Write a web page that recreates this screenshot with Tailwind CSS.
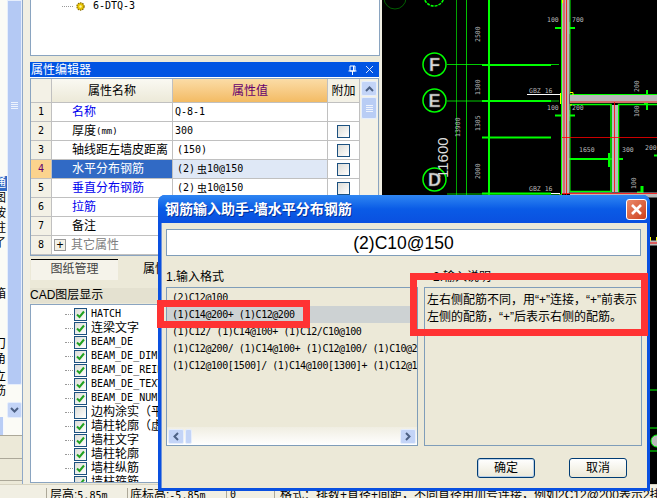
<!DOCTYPE html>
<html lang="zh">
<head>
<meta charset="UTF-8">
<title>钢筋输入助手</title>
<script src="https://cdn.jsdelivr.net/npm/@tailwindcss/browser@4"></script>
</head>
<body class="w-[657px] h-[498px] overflow-hidden bg-[#ece9d8] text-black text-[12px] leading-[14px] font-['Liberation_Sans','Noto_Sans_CJK_SC',sans-serif]">
<div class="relative w-[657px] h-[498px] overflow-hidden flex flex-col">

  <!-- main area -->
  <div class="flex h-[484px] shrink-0">

    <!-- far left strip -->
    <div class="w-[30px] shrink-0 flex bg-[#f1efe3]">
      <div class="w-[23px] h-full border-r border-[#8fa8c8] flex flex-col bg-[#ece9d8]">
        <div class="h-[436px] flex bg-[#fbfbf6] border-b border-[#aca899]">
          <div class="w-[7px] overflow-hidden whitespace-nowrap">
            <div class="-ml-[6px] w-[13px] pt-[2px]">
              <div class="h-[79px]">）</div>
              <div class="h-[89px]">）</div>
              <div class="bg-[#316ac5] text-white h-[15px] mt-[6px]">通</div>
              <div class="h-[15px]">图</div>
              <div class="h-[15px]">按</div>
              <div class="h-[15px]">柱</div>
              <div class="h-[51px]">了</div>
              <div class="h-[50px]">箱</div>
              <div class="h-[15px]">刀</div>
              <div class="h-[18px]">角</div>
              <div class="h-[14px]">立</div>
              <div class="h-[14px]">筋</div>
              <div class="mt-[19px] h-[18px] bg-[#b9cdf5] border-r border-[#f5f8ff] w-[10px]"></div>
            </div>
          </div>
          <div class="w-[15px] flex flex-col">
            <div class="h-[385px] bg-[#b4c9f4] border border-[#e6eefc] rounded-b-[2px] flex items-center justify-center">
              <div class="w-[7px] h-[7px] flex flex-col justify-between mt-[-175px]">
                <div class="h-px bg-[#eef3fd]"></div><div class="h-px bg-[#eef3fd]"></div><div class="h-px bg-[#eef3fd]"></div><div class="h-px bg-[#eef3fd]"></div>
              </div>
            </div>
            <div class="h-[17px]"></div>
            <div class="h-[16px] bg-[#c3d4f7] border border-[#e6eefc] rounded-[2px] flex items-center justify-center">
              <svg width="9" height="6" viewBox="0 0 9 6"><path d="M1 1l3.5 3.5L8 1" fill="none" stroke="#4d6185" stroke-width="2"/></svg>
            </div>
          </div>
        </div>
        <div class="h-[23px] border-b border-[#aca899]"></div>
        <div class="h-[22px] border-b border-[#aca899]"></div>
      </div>
    </div>

    <!-- middle panels -->
    <div class="w-[350px] shrink-0 flex flex-col">
      <div class="h-[56px] bg-white border-x border-b border-[#8aa4c0] relative shrink-0">
        <div class="flex items-center h-[12px] pl-[31px] gap-[2px]">
          <div class="w-[11px] border-t border-dotted border-[#999]"></div>
          <svg width="11" height="11" viewBox="0 0 11 11"><circle cx="5.5" cy="5.5" r="3.6" fill="#e8c400" stroke="#8a6d00" stroke-width="1.2" stroke-dasharray="1.5 0.8"/><circle cx="5.5" cy="5.5" r="1.2" fill="#fff6a0"/></svg>
          <span class="font-['DejaVu_Sans_Mono'] text-[10px] ml-[5px]">6-DTQ-3</span>
        </div>
      </div>
      <div class="h-[6px] shrink-0"></div>
      <div class="h-[15px] w-[349px] bg-[#0054e3] text-white pl-[1px] flex items-center shrink-0 relative">
        <span>属性编辑器</span>
        <svg class="ml-auto mr-[8px]" width="9" height="10" viewBox="0 0 9 10"><path d="M2 1h5v5H2zM0.5 6h8M4.5 6v4M5.5 1v5" fill="none" stroke="#fff"/></svg>
        <svg class="mr-[5px]" width="9" height="9" viewBox="0 0 9 9"><path d="M1 1l7 7M8 1L1 8" stroke="#dce6fb" stroke-width="1"/></svg>
      </div>
      <div class="h-px shrink-0 bg-white w-[349px]"></div>

      <!-- property table -->
      <div class="flex h-[178px] w-[349px] border border-[#8aa4c0] bg-white shrink-0 overflow-hidden">
        <div class="w-[329px] shrink-0 grid grid-cols-[21px_121px_155px_32px] grid-rows-[24px_repeat(8,19px)] content-start [&>div]:border-b [&>div]:border-r [&>div]:border-[#c0c0c0] [&>div]:flex [&>div]:items-center">
          <div class="bg-[#f3f1e6]"></div>
          <div class="bg-linear-to-b from-[#faf9f2] to-[#ece9d8] justify-center">属性名称</div>
          <div class="bg-linear-to-b from-[#fbdca6] to-[#f3bb63] justify-center text-[#66006e]">属性值</div>
          <div class="bg-[#f3f1e6] justify-center">附加</div>

          <div class="bg-[#f3f1e6] justify-center font-['DejaVu_Sans_Mono'] text-[10px]">1</div>
          <div class="pl-[20px] text-[#0000ee]">名称</div>
          <div class="pl-[2px] font-['DejaVu_Sans_Mono'] text-[10px]">Q-8-1</div>
          <div></div>

          <div class="bg-[#f3f1e6] justify-center font-['DejaVu_Sans_Mono'] text-[10px]">2</div>
          <div class="pl-[20px]">厚度<span class="font-['DejaVu_Sans_Mono'] text-[9px]">(mm)</span></div>
          <div class="pl-[2px] font-['DejaVu_Sans_Mono'] text-[10px]">300</div>
          <div class="justify-center"><div class="w-[13px] h-[13px] border border-[#1c5180] bg-linear-to-br from-[#dcdcd7] to-white"></div></div>

          <div class="bg-[#f3f1e6] justify-center font-['DejaVu_Sans_Mono'] text-[10px]">3</div>
          <div class="pl-[20px]">轴线距左墙皮距离</div>
          <div class="pl-[4px] font-['DejaVu_Sans_Mono'] text-[10px]">(150)</div>
          <div class="justify-center"><div class="w-[13px] h-[13px] border border-[#1c5180] bg-linear-to-br from-[#dcdcd7] to-white"></div></div>

          <div class="bg-[#fbd38d] justify-center font-['DejaVu_Sans_Mono'] text-[10px] text-[#66006e]">4</div>
          <div class="pl-[20px] bg-[#316ac5] text-white">水平分布钢筋</div>
          <div class="pl-[4px] bg-[#dfe8f6] font-['DejaVu_Sans_Mono'] text-[10px]">(2)<span class="font-['Noto_Sans_CJK_SC'] ml-[2px]">虫</span>10@150</div>
          <div class="justify-center"><div class="w-[13px] h-[13px] border border-[#1c5180] bg-linear-to-br from-[#dcdcd7] to-white"></div></div>

          <div class="bg-[#f3f1e6] justify-center font-['DejaVu_Sans_Mono'] text-[10px]">5</div>
          <div class="pl-[20px] text-[#0000ee]">垂直分布钢筋</div>
          <div class="pl-[4px] font-['DejaVu_Sans_Mono'] text-[10px]">(2)<span class="font-['Noto_Sans_CJK_SC'] ml-[2px]">虫</span>10@150</div>
          <div class="justify-center"><div class="w-[13px] h-[13px] border border-[#1c5180] bg-linear-to-br from-[#dcdcd7] to-white"></div></div>

          <div class="bg-[#f3f1e6] justify-center font-['DejaVu_Sans_Mono'] text-[10px]">6</div>
          <div class="pl-[20px] text-[#0000ee]">拉筋</div>
          <div></div>
          <div></div>

          <div class="bg-[#f3f1e6] justify-center font-['DejaVu_Sans_Mono'] text-[10px]">7</div>
          <div class="pl-[20px]">备注</div>
          <div></div>
          <div></div>

          <div class="bg-[#f3f1e6] justify-center font-['DejaVu_Sans_Mono'] text-[10px]">8</div>
          <div class="pl-[2px] text-[#808080] gap-[5px]"><span class="w-[12px] h-[12px] border border-[#9a9a9a] bg-[#f3f1e6] text-black flex items-center justify-center text-[12px]">+</span>其它属性</div>
          <div></div>
          <div></div>
        </div>
        <div class="flex-1 bg-[#f3f1e6] px-[1px] pt-[2px]">
          <div class="h-[15px] bg-[#c3d4f7] border border-[#e6eefc] rounded-[2px] flex items-center justify-center">
            <svg width="9" height="6" viewBox="0 0 9 6"><path d="M1 5l3.5-3.5L8 5" fill="none" stroke="#4d6185" stroke-width="2"/></svg>
          </div>
          <div class="h-[22px] mt-px bg-[#b9cdf5] border border-[#e6eefc] rounded-[2px] flex flex-col items-center justify-center gap-px">
            <div class="w-[7px] h-px bg-[#eef3fd]"></div><div class="w-[7px] h-px bg-[#eef3fd]"></div><div class="w-[7px] h-px bg-[#eef3fd]"></div><div class="w-[7px] h-px bg-[#eef3fd]"></div>
          </div>
        </div>
      </div>

      <!-- tabs -->
      <div class="flex h-[21px] w-[349px] mt-[3px] shrink-0 text-[#444]">
        <div class="w-[87px] border-t border-black bg-[#f5f3ea] text-center pt-[2px] ml-[1px]">图纸管理</div>
        <div class="pl-[25px] pt-[3px] text-black">属性</div>
      </div>
      <div class="h-[8px] shrink-0"></div>

      <!-- cad layers -->
      <div class="h-[15px] shrink-0 bg-[#e4e1d0] whitespace-nowrap">CAD图层显示</div>
      <div class="h-px shrink-0"></div>
      <div id="layers" class="w-[349px] h-[179px] bg-white border border-[#8aa4c0] overflow-hidden pt-[2px] shrink-0"></div>
    </div>

    <div class="w-[2px] shrink-0 bg-[#f1efe3]"></div>

    <!-- cad drawing -->
    <div class="flex-1 bg-black overflow-hidden">
      <svg width="275" height="484" viewBox="382 0 275 484" font-family="'Liberation Sans',sans-serif">
        <g fill="none" stroke="#00ff00">
          <circle cx="395" cy="-2" r="11" stroke-width="0.6" stroke="#00a000"/>
          <circle cx="434" cy="-4" r="10" stroke-width="1.5" stroke-dasharray="3 1"/>
          <circle cx="434.500" cy="64.500" r="11.500" stroke-width="1.5"/>
          <circle cx="434.500" cy="100.500" r="11.500" stroke-width="1.5"/>
          <circle cx="434.500" cy="179.500" r="11.500" stroke-width="1.5"/>
          <path d="M456.500 0v195" stroke="#00a000"/>
          <path d="M466.500 0v195" stroke="#00c000"/>
          <path d="M489 0v195" stroke-width="2"/>
          <path d="M447 64.500h112M447 101h112M447 194h112" stroke-width="0.8"/>
          <path d="M482 65h69M482 101h69M482 137.500h69M482 193.500h69" stroke-width="2"/>
          <path d="M555 28h20M555 115.500h20" stroke-width="2"/>
          <path d="M563 22v12M569 22v12M563 110v11M569 110v11" stroke-width="1.500"/>
          <path d="M563 159h60M609 153v14" stroke-width="2"/>
          <path d="M564 153v12" stroke-width="2"/>
          <path d="M639 98h8M647 90v20M645 97v8" stroke-width="2"/>
          <path d="M657 155.500h-3" stroke-width="2"/>
          <path d="M637 193h6M642 186v8" stroke-width="3"/>
          <path d="M561.500 0v195" />
          <path d="M570 0v94M570 104v88" />
          <path d="M570 94.500h87" />
          <path d="M570 104.500h41v87h-41M618.500 192V104.500h38.500" stroke-width="1.5"/>
        </g>
        <path d="M562 0h7.500v194h-7.500z" fill="#b8b8b8"/>
        <path d="M570 95h87v8h-87zM612 105h6v87h-6zM570 192.500h87v5h-87z" fill="#b8b8b8"/>
        <g fill="none" stroke="#ff0000" stroke-width="0.8">
          <path d="M564 0v195M566.500 0v195"/>
          <path d="M570 102h87M614.500 102v90M562 137.500h95M562 193.500h95"/>
        </g>
        <path d="M562.500 0v3M560.500 93v11M570 92.500h3v2.500M570 105h2M560 194v3" fill="none" stroke="#ffff00" stroke-width="1"/>
        <path d="M527 94.500h33M551 193.500h9" stroke="#fff" stroke-width="1"/>
        <g fill="#d8d8d8" font-size="18" font-weight="bold" text-anchor="middle" stroke="#666" stroke-width="0.4">
          <text x="434.500" y="71">F</text>
          <text x="434.500" y="107">E</text>
          <text x="434.500" y="186">D</text>
        </g>
        <text transform="translate(448 178) rotate(-90)" fill="#dddddd" font-size="15">11600</text>
        <g fill="#b8b8b8" font-size="6.500" font-family="'DejaVu Sans Mono',monospace">
          <text x="547" y="22">100</text><text x="572" y="22">700</text>
          <text x="529" y="93">GBZ 16</text><text x="529" y="191">GBZ 16</text>
          <text x="547" y="110">100</text><text x="572" y="110">200</text>
          <text x="579" y="152">1650</text><text x="622" y="152">300</text><text x="645" y="150">200</text>
          <text transform="translate(480 42) rotate(-90)">2500</text>
          <text transform="translate(480 95) rotate(-90)">1300</text>
          <text transform="translate(480 131) rotate(-90)">1305</text>
          <text transform="translate(480 179) rotate(-90)">2000</text>
          <text transform="translate(460 137) rotate(-90)">13900</text>
          <text transform="translate(639 92) rotate(-90)">200</text>
          <text transform="translate(639 117) rotate(-90)">100</text>
          <text transform="translate(636 189) rotate(-90)">100</text>
        </g>
        <g fill="none">
          <path d="M650 240h7" stroke="#ffff00" stroke-width="6" stroke-dasharray="1 5"/>
          <path d="M650 243h7" stroke="#b8b8b8" stroke-width="5"/>
          <path d="M650 243h7" stroke="#ff0000"/>
          <path d="M650 390h7M650 428h7M650 451h7" stroke="#00ff00"/>
          <circle cx="657" cy="441" r="6" fill="#b8b8b8" stroke="#00ff00"/>
        </g>
      </svg>
    </div>
  </div>

  <!-- status bar -->
  <div class="h-[14px] flex bg-[#f1efe3] border-t border-[#d8d4c2] overflow-hidden whitespace-nowrap pt-[3px] [&>div]:border-r [&>div]:border-[#aca899] [&>div]:h-[20px] [&>div]:shrink-0">
    <div class="w-[47px]"></div>
    <div class="w-[81px] pl-[3px]">层高:<span class="font-['DejaVu_Sans_Mono'] text-[10px]">5.85m</span></div>
    <div class="w-[99px] pl-[2px]">底标高:<span class="font-['DejaVu_Sans_Mono'] text-[10px]">-5.85m</span></div>
    <div class="w-[48px] pl-[3px] font-['DejaVu_Sans_Mono'] text-[10px]">0</div>
    <div class="border-0! pl-[5px]">格式：排数+直径+间距，不同直径用加号连接，例如2C12@200表示2排钢筋</div>
  </div>

  <!-- dialog -->
  <div class="absolute left-[158px] top-[195px] w-[492px] h-[296px] flex flex-col rounded-t-[7px] bg-[#0a50e0] px-[3px] pb-[3px] overflow-hidden">
    <div class="h-[28px] shrink-0 -mx-[3px] px-[7px] flex items-center bg-linear-to-b from-[#2f86f2] via-[#0a5be6] to-[#0a50e0] text-white text-[14px] font-bold [text-shadow:1px_1px_0_#00309c]">
      <span>钢筋输入助手-墙水平分布钢筋</span>
      <div class="ml-auto mr-[-4px] w-[21px] h-[21px] rounded-[3px] border border-white bg-linear-to-br from-[#ea8a6a] to-[#cc3d16] flex items-center justify-center">
        <svg width="13" height="13" viewBox="0 0 13 13"><path d="M2 2l9 9M11 2l-9 9" stroke="#fff" stroke-width="2.600"/></svg>
      </div>
    </div>
    <div class="flex-1 bg-[#ece9d8] px-[4px] pt-[6px] flex flex-col border-l border-[#6f94dc]">
      <div class="h-[27px] w-[475px] bg-white border border-[#7f9db9] flex items-center justify-center text-[17.5px] shrink-0">(2)C10@150</div>
      <div class="flex mt-[12px] h-[19px] pt-[2px] shrink-0">
        <div class="w-[267px]">1.输入格式</div>
        <div>2.输入说明</div>
      </div>
      <div class="flex gap-[6px] h-[159px] shrink-0">
        <div class="w-[252px] border border-[#7f9db9] flex flex-col overflow-hidden relative">
          <div class="flex-1 pt-[1px] whitespace-nowrap overflow-hidden font-['DejaVu_Sans_Mono'] text-[10px] tracking-[-0.45px] [&>div]:h-[17px] [&>div]:pl-[5px] [&>div]:flex [&>div]:items-center">
            <div>(2)C12@100</div>
            <div class="bg-[#cdd2d3]">(1)C14@200+ (1)C12@200</div>
            <div>(1)C12/ (1)C14@100+ (1)C12/C10@100</div>
            <div>(1)C12@200/ (1)C14@100+ (1)C12@100/ (1)C10@200</div>
            <div>(1)C12@100[1500]/ (1)C14@100[1300]+ (1)C12@100</div>
          </div>
          <div class="h-[18px] flex items-center px-[1px] bg-linear-to-b from-[#f0eee2] to-white shrink-0">
            <div class="w-[16px] h-[15px] bg-[#c3d4f7] border border-[#e6eefc] rounded-[2px] flex items-center justify-center">
              <svg width="6" height="9" viewBox="0 0 6 9"><path d="M5 1L1.500 4.500 5 8" fill="none" stroke="#4d6185" stroke-width="2"/></svg>
            </div>
            <div class="w-[7px] h-[15px] ml-px bg-[#c3d4f7] border border-[#e6eefc] rounded-[2px]"></div>
            <div class="ml-auto w-[16px] h-[15px] bg-[#c3d4f7] border border-[#e6eefc] rounded-[2px] flex items-center justify-center">
              <svg width="6" height="9" viewBox="0 0 6 9"><path d="M1 1l3.500 3.500L1 8" fill="none" stroke="#4d6185" stroke-width="2"/></svg>
            </div>
          </div>
        </div>
        <div class="w-[218px] border border-[#7f9db9] px-[2px] pt-[4px] text-[12px] leading-[17px]">
          左右侧配筋不同，用“+”连接，“+”前表示<br>左侧的配筋，“+”后表示右侧的配筋。
        </div>
      </div>
      <div class="flex mt-[12px] shrink-0">
        <button class="ml-[311px] w-[58px] h-[20px] rounded-[3px] border border-[#003c74] bg-linear-to-b from-white to-[#ece9d8] shadow-[inset_0_0_0_1px_#b8cfe8]">确定</button>
        <button class="ml-[34px] w-[58px] h-[20px] rounded-[3px] border border-[#003c74] bg-linear-to-b from-white to-[#ece9d8]">取消</button>
      </div>
    </div>
  </div>

  <!-- red annotation boxes -->
  <div class="absolute left-[157px] top-[300px] w-[153px] h-[28px] border-[7px] border-[#ff3333]"></div>
  <div class="absolute left-[410px] top-[273px] w-[238px] h-[63px] border-[7px] border-[#ff3333]"></div>
</div>

<script>
  // layer tree rows: [name, checked, is latin]
  const layers = [
    ['HATCH', true, true], ['连梁文字', true, false], ['BEAM_DE', true, true],
    ['BEAM_DE_DIM', true, true], ['BEAM_DE_REIN', true, true], ['BEAM_DE_TEXT', true, true],
    ['BEAM_DE_NUM', true, true], ['边构涂实（平', false, false], ['墙柱轮廓（虚', true, false],
    ['墙柱文字', true, false], ['墙柱轮廓', true, false], ['墙柱纵筋', true, false], ['墙柱箍筋', true, false]
  ];
  document.getElementById('layers').innerHTML = layers.map(([name, checked, latin]) => `
    <div class="h-[14px] flex items-center pl-[34px]">
      <div class="w-[8px] border-t border-dotted border-[#999]"></div>
      <div class="w-[13px] h-[13px] ml-[1px] border border-[#1c5180] bg-linear-to-br from-[#dcdcd7] to-white flex items-center justify-center shrink-0">
        ${checked ? '<svg width="9" height="9" viewBox="0 0 9 9"><path d="M1 4.500l2.500 2.500L8 1.500" fill="none" stroke="#21a121" stroke-width="2"/></svg>' : ''}
      </div>
      <span class="ml-[4px] whitespace-nowrap ${latin ? "font-['DejaVu_Sans_Mono'] text-[10px]" : ''}">${name}</span>
    </div>`).join('');
</script>
</body>
</html>
